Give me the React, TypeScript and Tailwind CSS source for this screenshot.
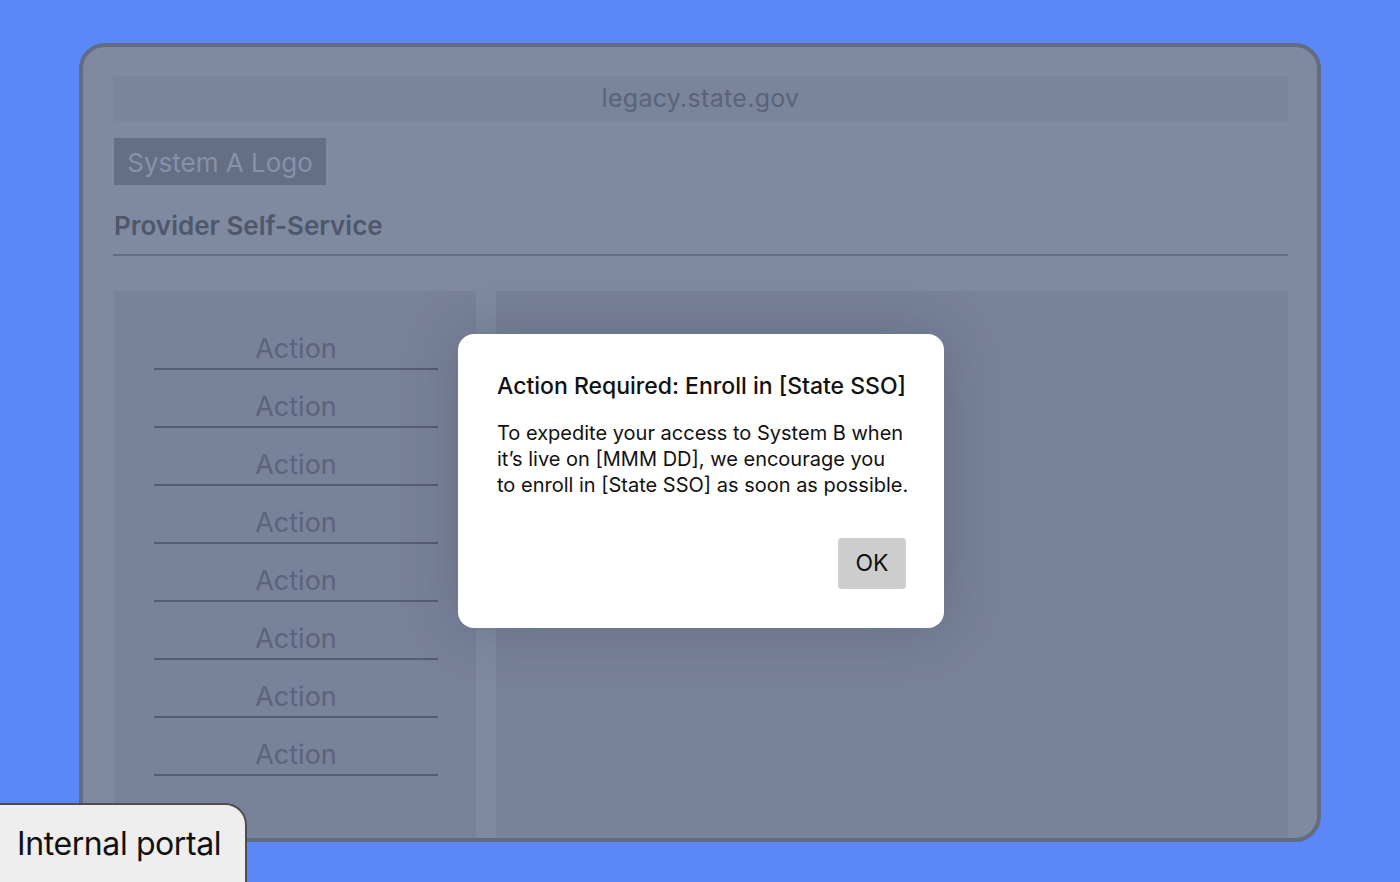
import React from "react";

export default function App() {
  const actions = Array.from({ length: 8 });
  return (
    <div
      className="relative w-[1400px] h-[882px] overflow-hidden bg-[#5b87f7] pt-[43px] pl-[79px]"
      style={{ fontFamily: "Inter, 'Noto Sans', sans-serif" }}
    >
      <div className="w-[1242px] h-[799px] rounded-[26px] border-[4px] border-[#636b80] bg-[#7f8aa1] pt-[29px] pl-[30px] pr-[29px] flex flex-col overflow-hidden">
        <div className="h-[45px] bg-[#7a849b] flex items-center justify-center text-[25px] leading-[30px] pb-[2px] text-[#5a6378] tracking-[0.3px]">
          legacy.state.gov
        </div>
        <div className="mt-[17px] w-[212px] h-[47px] bg-[#646e85] flex items-center justify-center text-[26px] leading-[30px] pt-[2px] text-[#8592a9] ml-px">
          System A Logo
        </div>
        <div className="mt-[25px] text-[26px] font-semibold text-[#4e576b] leading-[32px] ml-px">
          Provider Self-Service
        </div>
        <div className="mt-[12px] h-[2px] bg-[#646c82]" />
        <div className="mt-[35px] flex flex-1 gap-[20px] ml-px">
          <div className="w-[362px] bg-[#78829a] pt-[21px] pl-[40px] pr-[38px]">
            {actions.map((_, i) => (
              <div key={i} className="flex flex-col items-center">
                <div className="h-[56px] flex items-end justify-center pb-[4px] text-[27px] leading-[30px] text-[#5b647a]">
                  Action
                </div>
                <div className="w-full h-[2px] bg-[#555e74]" />
              </div>
            ))}
          </div>
          <div className="flex-1 bg-[#78829a]" />
        </div>
      </div>

      <div className="absolute left-[458px] top-[334px] w-[486px] h-[294px] bg-white rounded-[16px] shadow-[0_0_60px_rgba(40,45,60,0.25)] pt-[39px] pl-[39px] pr-[30px] pb-[39px] flex flex-col">
        <div className="text-[23px] leading-[26px] font-medium text-[#111] whitespace-nowrap">
          Action Required: Enroll in [State SSO]
        </div>
        <div className="mt-[21px] text-[20px] leading-[26px] text-[#111] whitespace-nowrap">
          To expedite your access to System B when
          <br />
          it’s live on [MMM DD], we encourage you
          <br />
          to enroll in [State SSO] as soon as possible.
        </div>
        <div className="mt-auto flex justify-end pr-[8px]">
          <div className="w-[68px] h-[51px] bg-[#cdcdcd] rounded-[4px] flex items-center justify-center text-[23px] text-[#111]">
            OK
          </div>
        </div>
      </div>

      <div className="absolute left-[-2px] top-[803px] w-[249px] h-[90px] bg-[#eeeeee] border-[2px] border-[#4d4d4d] rounded-tr-[22px] pl-[17px] pt-[20px] text-[32px] leading-[38px] text-[#111] tracking-[-0.4px]">
        Internal portal
      </div>
    </div>
  );
}
